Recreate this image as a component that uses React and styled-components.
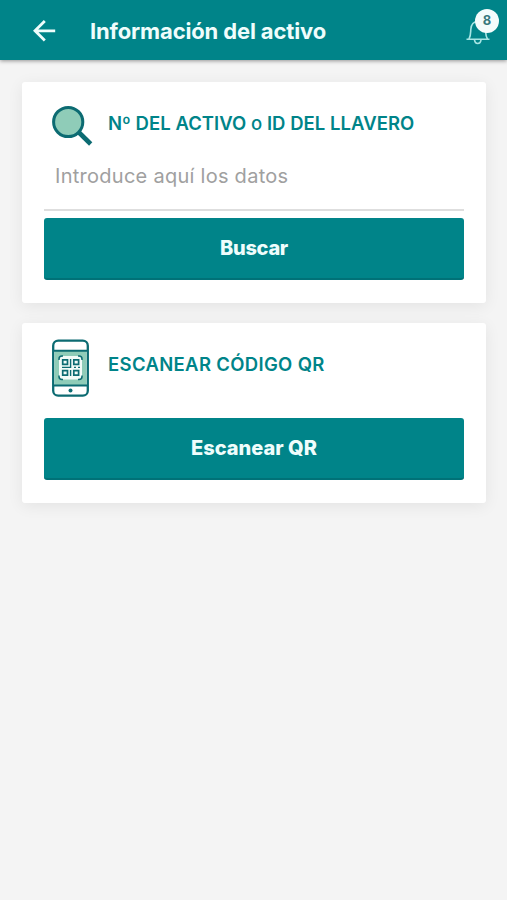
import React from 'react';
import styled, { createGlobalStyle } from 'styled-components';

const COLORS = {
  teal: '#008489',
  dark: '#0c6b72',
  mint: '#8fccb8',
  ice: '#effdfc',
};

const GlobalStyle = createGlobalStyle`
  * {
    box-sizing: border-box;
  }
  body {
    margin: 0;
    background: #f4f4f4;
    font-family: Inter, 'Liberation Sans', sans-serif;
  }
`;

const Screen = styled.div`
  min-height: 100vh;
`;

const Header = styled.header`
  display: flex;
  align-items: center;
  height: 60px;
  padding: 0 8px 0 32px;
  background: ${COLORS.teal};
  box-shadow: 0 1px 4px rgba(0, 0, 0, 0.4);
  .back {
    display: flex;
    padding: 0;
    border: 0;
    background: none;
  }
`;

const Title = styled.h1`
  flex: 1;
  margin: 2px 0 0 33px;
  color: ${COLORS.ice};
  font-size: 22px;
  font-weight: 700;
  line-height: 28px;
  letter-spacing: ${(props) => props.$spacing}px;
  white-space: nowrap;
`;

const Bell = styled.div`
  position: relative;
  display: flex;
  width: 34px;
  height: 44px;
`;

const Badge = styled.span`
  position: absolute;
  top: 1px;
  right: 0;
  width: 24px;
  height: 24px;
  border-radius: 50%;
  background: #f4fcfc;
  color: #39797e;
  font-size: 13px;
  font-weight: 700;
  line-height: 23px;
  text-align: center;
`;

const Content = styled.main`
  display: flex;
  flex-direction: column;
  gap: 20px;
  padding: 22px 21px 0 22px;
`;

const Card = styled.section`
  display: flex;
  flex-direction: column;
  height: ${(props) => props.$height}px;
  padding: 0 22px 23px;
  border-radius: 3px;
  background: #fff;
  box-shadow: 0 3px 16px rgba(0, 0, 0, 0.07);
`;

const CardHeader = styled.div`
  display: flex;
  padding: ${(props) => props.$top}px 0 0 8px;
  svg {
    flex: none;
  }
`;

const CardTitle = styled.h2`
  margin: ${(props) => props.$top}px 0 0 15px;
  color: ${COLORS.teal};
  font-size: 18.5px;
  font-weight: 600;
  line-height: 24px;
  letter-spacing: ${(props) => props.$spacing}px;
  white-space: nowrap;
  span {
    font-weight: 500;
  }
`;

const Field = styled.input`
  width: 100%;
  height: 50px;
  margin-top: auto;
  padding: 0 11px 18px;
  border: 0;
  border-bottom: 2px solid #dedede;
  outline: none;
  background: none;
  font-family: inherit;
  font-size: 20px;
  letter-spacing: 0.27px;
  &::placeholder {
    color: #a0a0a0;
    opacity: 1;
  }
`;

const Button = styled.button`
  flex: none;
  height: 62px;
  margin-top: ${(props) => props.$top};
  padding: 0 0 1px;
  border: 0;
  border-bottom: 2px solid #007177;
  border-radius: 3px;
  background: ${COLORS.teal};
  color: ${COLORS.ice};
  font-family: inherit;
  font-size: 20px;
  font-weight: 800;
  letter-spacing: ${(props) => props.$spacing}px;
`;

const ArrowIcon = () => (
  <svg width='25' height='24' viewBox='0 0 25 24' fill='none' stroke={COLORS.ice} strokeWidth='2.8'>
    <path d='M23.2 12.8H3M12.8 3L3 12.8L12.8 22.6' />
  </svg>
);

const BellIcon = () => (
  <svg width='34' height='44' viewBox='0 0 34 44' fill='none' stroke='#a7e5e4' strokeWidth='1.6'>
    <path d='M1.5 31.2H24.5M4 31C5.8 28 5.6 25 5.8 21.5C6.1 16.5 8.8 13.5 13 13.5C17.2 13.5 20 16.5 20.4 21.5C20.7 25 20.5 28 22.5 31' />
    <path d='M9.5 32C9.8 34.5 11 35.5 12.7 35.5C14.4 35.5 15.7 34.5 16 32' />
  </svg>
);

const SearchIcon = () => (
  <svg width='41' height='42' viewBox='0 0 41 42'>
    <path d='M27 27.5L38.7 39' stroke={COLORS.dark} strokeWidth='4.6' />
    <circle cx='16.2' cy='17' r='14.6' fill={COLORS.mint} stroke={COLORS.dark} strokeWidth='3' />
  </svg>
);

const PhoneQrIcon = () => (
  <svg width='41' height='58' viewBox='0 0 41 58' fill='none' stroke={COLORS.dark}>
    <rect x='1.2' y='1.7' width='34.6' height='55' rx='5' fill='#fff' strokeWidth='2.3' />
    <path d='M2.4 12H34.6V46.5H2.4Z' fill={COLORS.mint} stroke='none' />
    <path d='M2 11.8H35M2 46.5H35' strokeWidth='2' />
    <circle cx='18.5' cy='51.6' r='2' fill={COLORS.dark} stroke='none' />
    <rect x='7' y='17' width='23' height='23.5' rx='4' fill='#f2fbf8' stroke='none' />
    <path
      d='M7 21V20Q7 17 10 17H11M26 17H27Q30 17 30 20V21M30 36.5V37.5Q30 40.5 27 40.5H26M11 40.5H10Q7 40.5 7 37.5V36.5'
      strokeWidth='1.5'
    />
    <path
      d='M10.7 20.8H15.5V25.4H10.7ZM21.8 20.8H26.6V25.4H21.8ZM10.7 31.6H15.5V36.2H10.7ZM21.8 31.6H26.6V36.2H21.8Z'
      strokeWidth='1.7'
    />
    <path d='M18.6 20V28.4H10M18.6 31V37M22 28.4H24M26 28.4H28' strokeWidth='1.4' />
  </svg>
);

const App = () => (
  <Screen>
    <GlobalStyle />
    <Header>
      <button className='back' aria-label='Volver'>
        <ArrowIcon />
      </button>
      <Title $spacing={-0.14}>Información del activo</Title>
      <Bell>
        <BellIcon />
        <Badge>8</Badge>
      </Bell>
    </Header>
    <Content>
      <Card $height={221}>
        <CardHeader $top={23}>
          <SearchIcon />
          <CardTitle $top={6} $spacing={0.04}>
            Nº DEL ACTIVO <span>o</span> ID DEL LLAVERO
          </CardTitle>
        </CardHeader>
        <Field placeholder='Introduce aquí los datos' />
        <Button $top='7px' $spacing={-0.3}>
          Buscar
        </Button>
      </Card>
      <Card $height={180}>
        <CardHeader $top={16}>
          <PhoneQrIcon />
          <CardTitle $top={13} $spacing={0.33}>
            ESCANEAR CÓDIGO QR
          </CardTitle>
        </CardHeader>
        <Button $top='auto' $spacing={0}>
          Escanear QR
        </Button>
      </Card>
    </Content>
  </Screen>
);

export default App;
